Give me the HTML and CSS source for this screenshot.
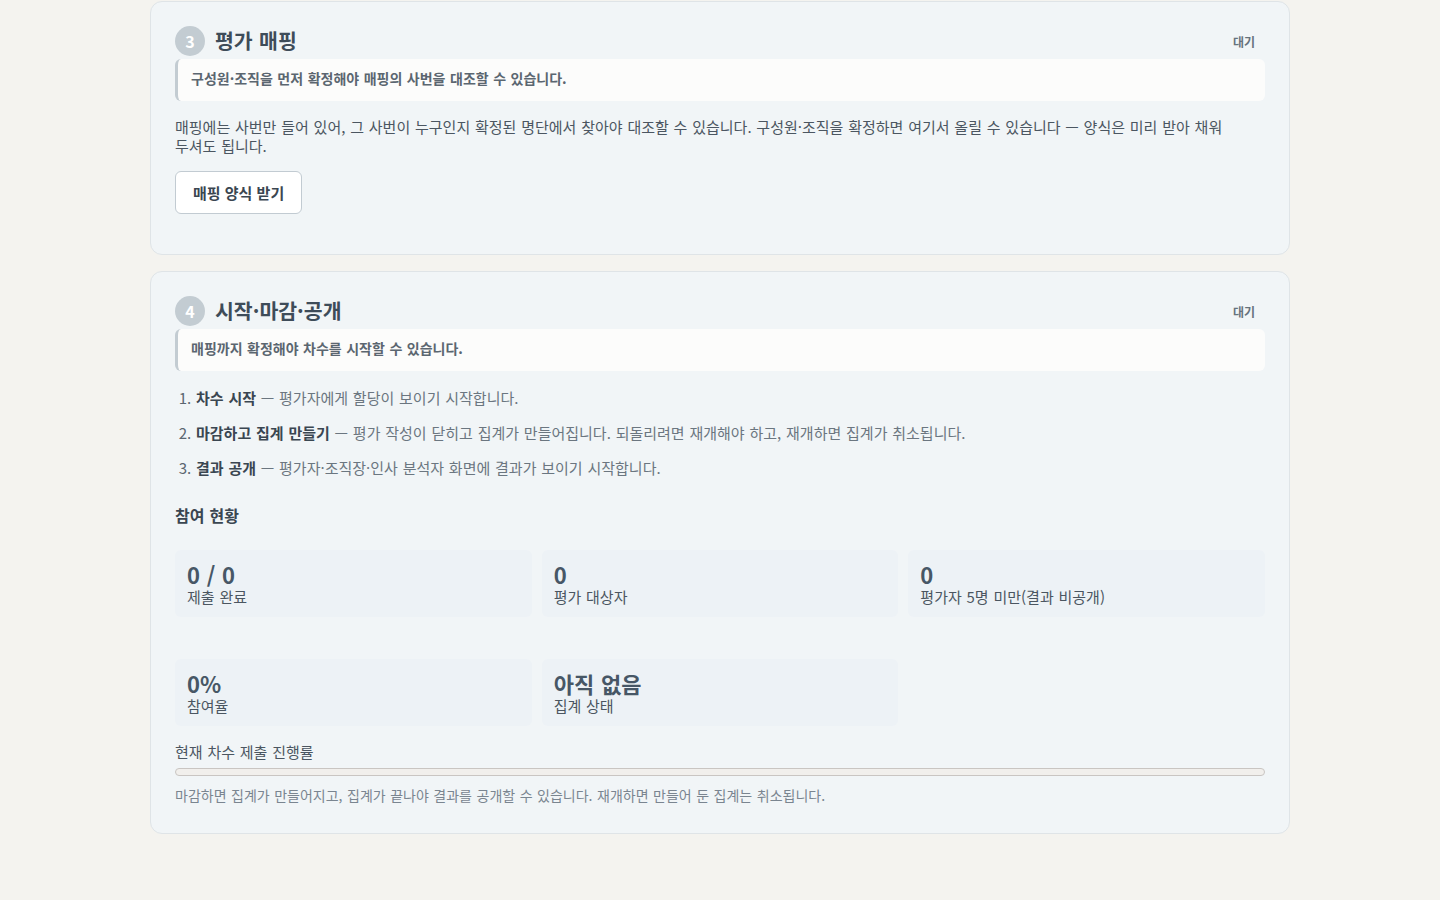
FILE: index.html
```html
<!DOCTYPE html>
<html lang="ko">
<head>
<meta charset="utf-8">
<title>평가 단계</title>
<link rel="stylesheet" href="styles.css">
</head>
<body>
<main class="page">
  <section class="card">
    <header class="card-head">
      <span class="step">3</span>
      <h2 class="card-title">평가 매핑</h2>
      <span class="status">대기</span>
    </header>
    <div class="notice">구성원·조직을 먼저 확정해야 매핑의 사번을 대조할 수 있습니다.</div>
    <p class="desc">매핑에는 사번만 들어 있어, 그 사번이 누구인지 확정된 명단에서 찾아야 대조할 수 있습니다. 구성원·조직을 확정하면 여기서 올릴 수 있습니다 — 양식은 미리 받아 채워 두셔도 됩니다.</p>
    <button class="btn" type="button">매핑 양식 받기</button>
  </section>

  <section class="card">
    <header class="card-head">
      <span class="step">4</span>
      <h2 class="card-title">시작·마감·공개</h2>
      <span class="status">대기</span>
    </header>
    <div class="notice">매핑까지 확정해야 차수를 시작할 수 있습니다.</div>
    <ol class="steps">
      <li><strong>차수 시작</strong> — 평가자에게 할당이 보이기 시작합니다.</li>
      <li><strong>마감하고 집계 만들기</strong> — 평가 작성이 닫히고 집계가 만들어집니다. 되돌리려면 재개해야 하고, 재개하면 집계가 취소됩니다.</li>
      <li><strong>결과 공개</strong> — 평가자·조직장·인사 분석자 화면에 결과가 보이기 시작합니다.</li>
    </ol>
    <h3 class="sub">참여 현황</h3>
    <div class="stats">
      <div class="stat"><div class="stat-num">0 / 0</div><div class="stat-label">제출 완료</div></div>
      <div class="stat"><div class="stat-num">0</div><div class="stat-label">평가 대상자</div></div>
      <div class="stat"><div class="stat-num">0</div><div class="stat-label">평가자 5명 미만(결과 비공개)</div></div>
      <div class="stat"><div class="stat-num">0%</div><div class="stat-label">참여율</div></div>
      <div class="stat"><div class="stat-num">아직 없음</div><div class="stat-label">집계 상태</div></div>
    </div>
    <div class="progress-label">현재 차수 제출 진행률</div>
    <div class="progress"><div class="progress-fill" style="width:0%"></div></div>
    <p class="foot">마감하면 집계가 만들어지고, 집계가 끝나야 결과를 공개할 수 있습니다. 재개하면 만들어 둔 집계는 취소됩니다.</p>
  </section>
</main>
</body>
</html>
```

FILE: styles.css
```css
* { box-sizing: border-box; }
html, body { margin: 0; padding: 0; }
body {
  background: #f4f3ef;
  font-family: "Noto Sans CJK KR", "Noto Sans", sans-serif;
  color: #3d4a56;
  word-spacing: 0.6px;
}
.page {
  width: 1140px;
  margin: 0 auto;
  padding: 1px 0 40px;
  display: flex;
  flex-direction: column;
  gap: 16px;
}
.card {
  background: #f1f5f7;
  border: 1px solid #dfe4e7;
  border-radius: 12px;
  padding: 24px 24px 28px;
}
.card-head {
  display: flex;
  align-items: center;
  gap: 10px;
  height: 30px;
  margin-bottom: 3px;
}
.step {
  width: 30px;
  height: 30px;
  border-radius: 50%;
  background: #c3ccd2;
  color: #fff;
  font-size: 16px;
  font-weight: 700;
  display: flex;
  align-items: center;
  justify-content: center;
}
.card-title {
  margin: 0 0 2px;
  font-size: 20.5px;
  font-weight: 700;
  color: #3e4c59;
  flex: 1;
  line-height: 30px;
}
.status {
  font-size: 12px;
  font-weight: 700;
  color: #66727d;
  margin-right: 10px;
}
.notice {
  background: #fcfcfb;
  border-left: 3px solid #c3ccd2;
  border-radius: 6px;
  padding: 0 13px 4px;
  height: 42px;
  display: flex;
  align-items: center;
  font-size: 14px;
  font-weight: 700;
  color: #5b6670;
}
.desc {
  margin: 16px 0 16px;
  padding-right: 30px;
  font-size: 15px;
  line-height: 19px;
  color: #4b5661;
}
.btn {
  font-family: inherit;
  background: #fff;
  border: 1px solid #c2cbd2;
  border-radius: 6px;
  height: 43px;
  padding: 0 17px;
  font-size: 15px;
  font-weight: 700;
  color: #3a4651;
  margin-bottom: 12px;
}
.steps {
  margin: 17px 0 0;
  padding-left: 21px;
  font-size: 15px;
  line-height: 20px;
  color: #6b7680;
}
.steps li { margin-bottom: 15px; }
.steps li::marker { color: #5b6670; }
.steps strong { color: #3a4651; font-weight: 700; }
.sub {
  margin: 26px 0 0;
  font-size: 16px;
  font-weight: 700;
  color: #3a4651;
  line-height: 22px;
}
.stats {
  margin-top: 24px;
  display: grid;
  grid-template-columns: repeat(3, 1fr);
  column-gap: 10px;
  row-gap: 42px;
}
.stat {
  background: #edf2f6;
  border-radius: 6px;
  height: 67px;
  padding: 13px 12px 0;
}
.stat-num {
  font-size: 22px;
  font-weight: 700;
  line-height: 22px;
  color: #475766;
}
.stat-label {
  margin-top: 2px;
  font-size: 15px;
  line-height: 19px;
  color: #4b5661;
}
.progress-label {
  margin-top: 16px;
  font-size: 15px;
  line-height: 20px;
  color: #4b5661;
}
.progress {
  margin-top: 6px;
  height: 8px;
  border: 1px solid #c9c5c2;
  border-radius: 4px;
  background: #f1efec;
  overflow: hidden;
}
.progress-fill { height: 100%; background: #6b7f90; }
.foot {
  margin: 10px 0 1px;
  font-size: 14px;
  line-height: 18px;
  color: #7a8590;
}
```
